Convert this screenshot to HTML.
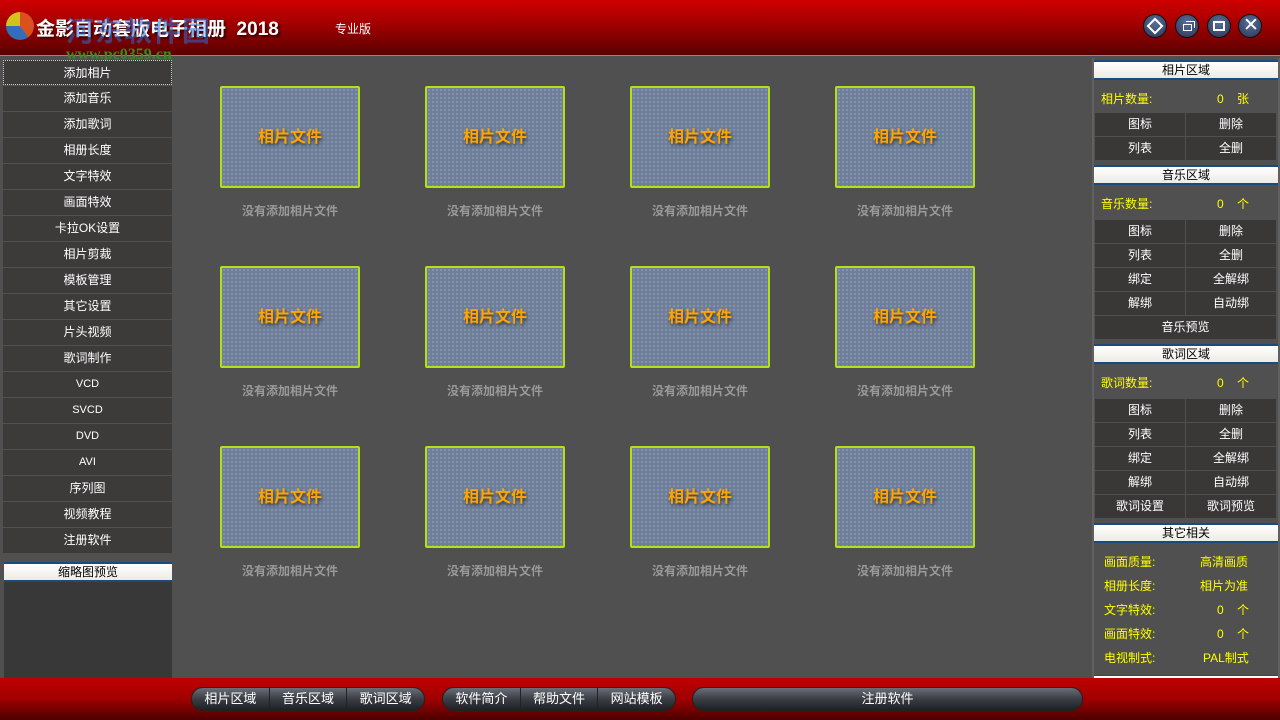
<!DOCTYPE html>
<html><head><meta charset="utf-8">
<style>
*{margin:0;padding:0;box-sizing:border-box}
body{width:1280px;height:720px;overflow:hidden;background:#505050;position:relative;font-family:"Liberation Sans","Noto Sans CJK SC",sans-serif;font-size:12px;color:#fff}
.a{position:absolute}
.top{left:0;top:0;width:1280px;height:56px;background:linear-gradient(#d00000,#9a0000 50%,#5a0000);border-bottom:1px solid #888}
.bot{left:0;top:678px;width:1280px;height:42px;background:linear-gradient(#c00000,#a00000 50%,#4a0000)}
.menu{left:3px;width:169px;height:25px;background:#3d3a3a;text-align:center;line-height:25px;font-size:12px}
.hd{background:linear-gradient(#fff,#ecebe4);border-top:2px solid #1a4a80;border-bottom:2px solid #1a4a80;color:#000;text-align:center;font-size:12px;line-height:16px;height:20px}
.cell{width:90px;height:23px;background:#3a3737;text-align:center;line-height:23px;font-size:12px}
.y{color:#ff0;font-size:12px}
.th{width:140px;height:102px;border:2px solid #b4e01a;border-radius:2px;background:#6f7f9a;background-image:radial-gradient(#8a99b3 0.8px,transparent 1px);background-size:4px 4px;color:#ffa500;font-weight:bold;font-size:16px;text-align:center;line-height:100px;text-shadow:1px 2px 3px #333}
.cap{width:140px;text-align:center;color:#9a9a9a;font-size:12px;font-weight:bold}
.pill{top:687px;height:24px;border-radius:12px;background:linear-gradient(#6a6e78,#3a3d44 50%,#1e2026);border:1px solid #222;display:flex;overflow:hidden}
.pill div{flex:1;text-align:center;line-height:22px;font-size:13px;border-right:1px solid #222}
.pill div:last-child{border-right:none}
.wb{top:14px;width:24px;height:24px;border-radius:50%;background:radial-gradient(circle at 50% 35%,#5a6f98,#2a3555);border:1px solid #111}
</style></head><body>
<div class="a top"></div>
<div class="a" style="left:6px;top:12px;width:28px;height:28px;border-radius:50%;background:conic-gradient(#e05a20 0 40%,#2a7ad0 40% 75%,#d8d820 75%);opacity:.9"></div>
<div class="a" style="left:36px;top:14px;font-size:19px;font-weight:bold;text-shadow:2px 2px 2px #300">金影自动套版电子相册&nbsp; 2018</div>
<div class="a" style="left:66px;top:10px;font-size:28px;font-weight:bold;color:rgba(40,110,210,.55);letter-spacing:1px">河东软件园</div>
<div class="a" style="left:66px;top:46px;font-size:16px;font-weight:bold;color:#3a8a20;font-family:'Liberation Serif',serif">www.pc0359.cn</div>
<div class="a" style="left:335px;top:20px;font-size:12px">专业版</div>
<div class="a wb" style="left:1143px"></div><div class="a" style="left:1149px;top:20px;width:12px;height:12px;border:2px solid #fff;transform:rotate(45deg)"></div>
<div class="a wb" style="left:1175px"></div><div class="a" style="left:1183px;top:24px;width:9px;height:7px;border:1.5px solid #fff"></div><div class="a" style="left:1186px;top:21px;width:9px;height:7px;border:1.5px solid #fff;border-left:none;border-bottom:none"></div>
<div class="a wb" style="left:1207px"></div><div class="a" style="left:1213px;top:21px;width:12px;height:10px;border:2px solid #fff"></div>
<div class="a wb" style="left:1238px"></div><div class="a" style="left:1243px;top:14px;font-size:19px;line-height:24px">✕</div>

<div class="a menu" style="top:60px;border:1px dotted #ccc">添加相片</div>
<div class="a menu" style="top:86px">添加音乐</div>
<div class="a menu" style="top:112px">添加歌词</div>
<div class="a menu" style="top:138px">相册长度</div>
<div class="a menu" style="top:164px">文字特效</div>
<div class="a menu" style="top:190px">画面特效</div>
<div class="a menu" style="top:216px">卡拉OK设置</div>
<div class="a menu" style="top:242px">相片剪裁</div>
<div class="a menu" style="top:268px">模板管理</div>
<div class="a menu" style="top:294px">其它设置</div>
<div class="a menu" style="top:320px">片头视频</div>
<div class="a menu" style="top:346px">歌词制作</div>
<div class="a menu" style="top:372px;font-size:11px">VCD</div>
<div class="a menu" style="top:398px;font-size:11px">SVCD</div>
<div class="a menu" style="top:424px;font-size:11px">DVD</div>
<div class="a menu" style="top:450px;font-size:11px">AVI</div>
<div class="a menu" style="top:476px">序列图</div>
<div class="a menu" style="top:502px">视频教程</div>
<div class="a menu" style="top:528px">注册软件</div>
<div class="a hd" style="left:4px;top:562px;width:168px">缩略图预览</div>
<div class="a" style="left:4px;top:582px;width:168px;height:96px;background:#383838"></div>

<div class="a th" style="left:220px;top:86px">相片文件</div><div class="a cap" style="left:220px;top:202px">没有添加相片文件</div>
<div class="a th" style="left:425px;top:86px">相片文件</div><div class="a cap" style="left:425px;top:202px">没有添加相片文件</div>
<div class="a th" style="left:630px;top:86px">相片文件</div><div class="a cap" style="left:630px;top:202px">没有添加相片文件</div>
<div class="a th" style="left:835px;top:86px">相片文件</div><div class="a cap" style="left:835px;top:202px">没有添加相片文件</div>
<div class="a th" style="left:220px;top:266px">相片文件</div><div class="a cap" style="left:220px;top:382px">没有添加相片文件</div>
<div class="a th" style="left:425px;top:266px">相片文件</div><div class="a cap" style="left:425px;top:382px">没有添加相片文件</div>
<div class="a th" style="left:630px;top:266px">相片文件</div><div class="a cap" style="left:630px;top:382px">没有添加相片文件</div>
<div class="a th" style="left:835px;top:266px">相片文件</div><div class="a cap" style="left:835px;top:382px">没有添加相片文件</div>
<div class="a th" style="left:220px;top:446px">相片文件</div><div class="a cap" style="left:220px;top:562px">没有添加相片文件</div>
<div class="a th" style="left:425px;top:446px">相片文件</div><div class="a cap" style="left:425px;top:562px">没有添加相片文件</div>
<div class="a th" style="left:630px;top:446px">相片文件</div><div class="a cap" style="left:630px;top:562px">没有添加相片文件</div>
<div class="a th" style="left:835px;top:446px">相片文件</div><div class="a cap" style="left:835px;top:562px">没有添加相片文件</div>

<div class="a" style="left:1092px;top:58px;width:188px;height:620px;border:2px solid #606060;border-top:none"></div>
<div class="a hd" style="left:1094px;top:60px;width:184px">相片区域</div>
<div class="a y" style="left:1101px;top:90px">相片数量:</div><div class="a y" style="left:1217px;top:90px">0&nbsp;&nbsp;&nbsp; 张</div>
<div class="a cell" style="left:1095px;top:113px">图标</div><div class="a cell" style="left:1186px;top:113px">删除</div>
<div class="a cell" style="left:1095px;top:137px">列表</div><div class="a cell" style="left:1186px;top:137px">全删</div>

<div class="a hd" style="left:1094px;top:165px;width:184px">音乐区域</div>
<div class="a y" style="left:1101px;top:195px">音乐数量:</div><div class="a y" style="left:1217px;top:195px">0&nbsp;&nbsp;&nbsp; 个</div>
<div class="a cell" style="left:1095px;top:220px">图标</div><div class="a cell" style="left:1186px;top:220px">删除</div>
<div class="a cell" style="left:1095px;top:244px">列表</div><div class="a cell" style="left:1186px;top:244px">全删</div>
<div class="a cell" style="left:1095px;top:268px">绑定</div><div class="a cell" style="left:1186px;top:268px">全解绑</div>
<div class="a cell" style="left:1095px;top:292px">解绑</div><div class="a cell" style="left:1186px;top:292px">自动绑</div>
<div class="a cell" style="left:1095px;top:316px;width:181px">音乐预览</div>

<div class="a hd" style="left:1094px;top:344px;width:184px">歌词区域</div>
<div class="a y" style="left:1101px;top:374px">歌词数量:</div><div class="a y" style="left:1217px;top:374px">0&nbsp;&nbsp;&nbsp; 个</div>
<div class="a cell" style="left:1095px;top:399px">图标</div><div class="a cell" style="left:1186px;top:399px">删除</div>
<div class="a cell" style="left:1095px;top:423px">列表</div><div class="a cell" style="left:1186px;top:423px">全删</div>
<div class="a cell" style="left:1095px;top:447px">绑定</div><div class="a cell" style="left:1186px;top:447px">全解绑</div>
<div class="a cell" style="left:1095px;top:471px">解绑</div><div class="a cell" style="left:1186px;top:471px">自动绑</div>
<div class="a cell" style="left:1095px;top:495px">歌词设置</div><div class="a cell" style="left:1186px;top:495px">歌词预览</div>

<div class="a hd" style="left:1094px;top:523px;width:184px">其它相关</div>
<div class="a y" style="left:1104px;top:553px">画面质量:</div><div class="a y" style="left:1200px;top:553px">高清画质</div>
<div class="a y" style="left:1104px;top:577px">相册长度:</div><div class="a y" style="left:1200px;top:577px">相片为准</div>
<div class="a y" style="left:1104px;top:601px">文字特效:</div><div class="a y" style="left:1217px;top:601px">0&nbsp;&nbsp;&nbsp; 个</div>
<div class="a y" style="left:1104px;top:625px">画面特效:</div><div class="a y" style="left:1217px;top:625px">0&nbsp;&nbsp;&nbsp; 个</div>
<div class="a y" style="left:1104px;top:649px">电视制式:</div><div class="a y" style="left:1203px;top:649px">PAL制式</div>
<div class="a" style="left:1094px;top:675px;width:184px;height:3px;background:#fff;border-top:1px solid #1a4a80"></div>

<div class="a bot"></div>
<div class="a pill" style="left:191px;width:234px"><div>相片区域</div><div>音乐区域</div><div>歌词区域</div></div>
<div class="a pill" style="left:442px;width:234px"><div>软件简介</div><div>帮助文件</div><div>网站模板</div></div>
<div class="a pill" style="left:692px;width:391px"><div>注册软件</div></div>
</body></html>
